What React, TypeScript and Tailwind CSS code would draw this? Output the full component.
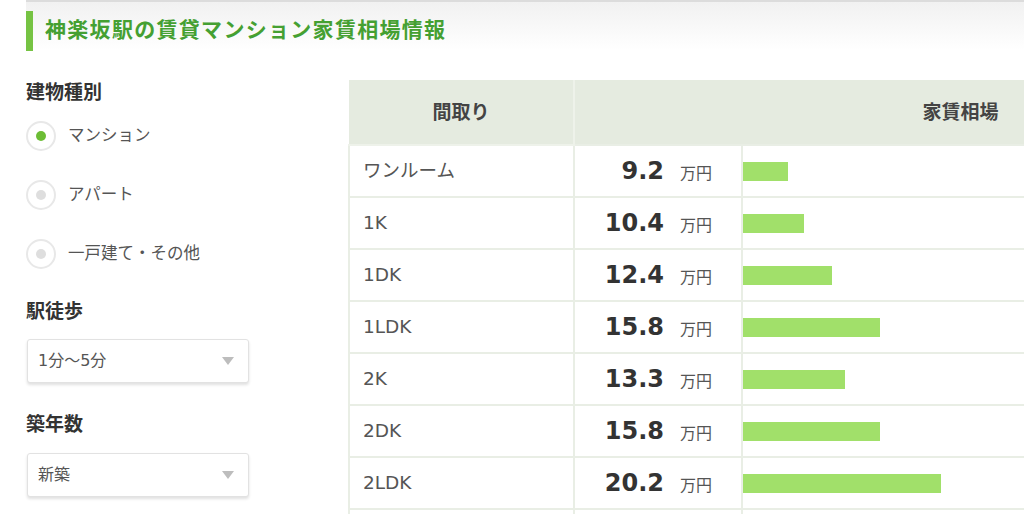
import React from 'react';

const jp = { fontFamily: '"DejaVu Sans", "Noto Sans CJK JP", sans-serif' };

interface RentRow {
  layout: string;
  price: string;
  bar: number;
}

const rows: RentRow[] = [
  { layout: 'ワンルーム', price: '9.2', bar: 45 },
  { layout: '1K', price: '10.4', bar: 61 },
  { layout: '1DK', price: '12.4', bar: 89 },
  { layout: '1LDK', price: '15.8', bar: 137 },
  { layout: '2K', price: '13.3', bar: 102 },
  { layout: '2DK', price: '15.8', bar: 137 },
  { layout: '2LDK', price: '20.2', bar: 198 },
];

const Radio: React.FC<{ label: string; checked?: boolean }> = ({ label, checked }) => (
  <label className="flex items-center h-[30px] gap-[12px]">
    <span className="w-[30px] h-[30px] rounded-full border-2 border-[#e8e8e8] bg-white flex items-center justify-center">
      <span className={`w-[10px] h-[10px] rounded-full ${checked ? 'bg-[#6cbd35]' : 'bg-[#dedede]'}`} />
    </span>
    <span className="text-[16.5px] text-[#555]">{label}</span>
  </label>
);

const SelectBox: React.FC<{ value: string }> = ({ value }) => (
  <div className="w-[222px] h-[44px] ml-[1px] rounded-[3px] border border-[#e2e2e2] bg-white shadow-[0_2px_3px_rgba(0,0,0,0.12)] flex items-center justify-between pl-[10px] pr-[14px]">
    <span className="text-[16px] text-[#555]">{value}</span>
    <svg width="12" height="8" viewBox="0 0 12 8">
      <path d="M0 0 L12 0 L6 8 Z" fill="#bdbdbd" />
    </svg>
  </div>
);

export default function App() {
  return (
    <div className="w-[1024px] h-[514px] overflow-hidden bg-white relative" style={jp}>
      <div className="ml-[26px] w-[1100px]">
        <div className="h-[2px] bg-[#dcdcdc]" />
        <div className="bg-gradient-to-b from-[#f1f1f1] to-white h-[48px] -mb-[48px]" />
        <div className="relative flex items-center h-[58px]">
          <div className="w-[7px] h-[40px] bg-[#76c343]" />
          <h1 className="ml-[12px] text-[21px] font-bold text-[#45a032] tracking-[1.3px]">
            神楽坂駅の賃貸マンション家賃相場情報
          </h1>
        </div>

        <div className="flex mt-[20px]">
          <div className="w-[322px] shrink-0">
            <h2 className="text-[19px] font-bold text-[#333] leading-[24px]">建物種別</h2>
            <div className="mt-[17px] flex flex-col gap-[29px]">
              <Radio label="マンション" checked />
              <Radio label="アパート" />
              <Radio label="一戸建て・その他" />
            </div>

            <h2 className="mt-[30px] text-[19px] font-bold text-[#333] leading-[24px]">駅徒歩</h2>
            <div className="mt-[16px]">
              <SelectBox value="1分〜5分" />
            </div>

            <h2 className="mt-[29px] text-[19px] font-bold text-[#333] leading-[24px]">築年数</h2>
            <div className="mt-[17px]">
              <SelectBox value="新築" />
            </div>
          </div>

          <table className="border-collapse table-fixed w-[999px] shrink-0">
            <colgroup>
              <col className="w-[225px]" />
              <col className="w-[168px]" />
              <col />
            </colgroup>
            <thead>
              <tr className="bg-[#e5ebe0] h-[65px]">
                <th className="border-2 border-[#eef2ea] border-t-0 border-l-0 text-[19px] font-bold text-[#444]">間取り</th>
                <th colSpan={2} className="text-[19px] font-bold text-[#444]">家賃相場</th>
              </tr>
            </thead>
            <tbody>
              {rows.map((r) => (
                <tr key={r.layout} className="h-[52px]">
                  <td className="border-2 border-[#e9eee5] pl-[13px] text-[18.5px] text-[#555]">{r.layout}</td>
                  <td className="border-2 border-[#e9eee5] pr-[29px]">
                    <div className="flex items-baseline justify-end">
                      <span className="text-[24px] font-bold text-[#333]">{r.price}</span>
                      <span className="ml-[16px] text-[16px] text-[#555]">万円</span>
                    </div>
                  </td>
                  <td className="border-2 border-[#e9eee5] p-0">
                    <div className="h-[19px] bg-[#a1e06a]" style={{ width: r.bar }} />
                  </td>
                </tr>
              ))}
              <tr className="h-[52px]">
                <td className="border-2 border-[#e9eee5]" />
                <td className="border-2 border-[#e9eee5]" />
                <td className="border-2 border-[#e9eee5]" />
              </tr>
            </tbody>
          </table>
        </div>
      </div>
    </div>
  );
}
